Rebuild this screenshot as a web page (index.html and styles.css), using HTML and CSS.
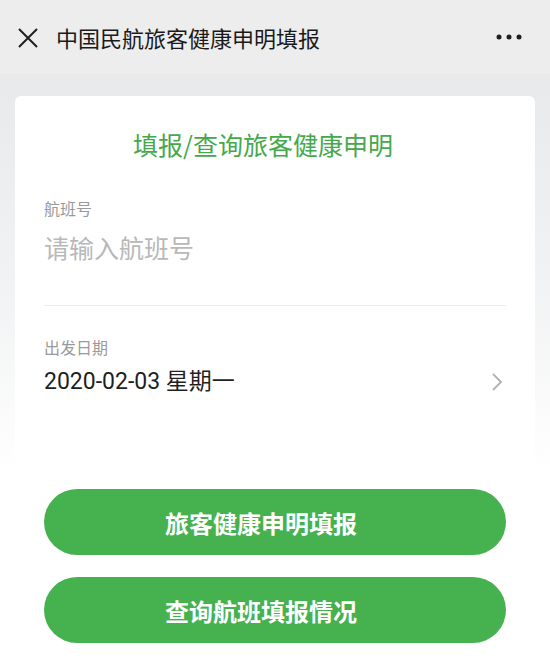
FILE: index.html
```html
<!DOCTYPE html>
<html lang="zh">
<head>
  <meta charset="UTF-8">
  <meta name="viewport" content="width=device-width, initial-scale=1.0">
  <title>中国民航旅客健康申明填报</title>
  <link rel="stylesheet" href="styles.css">
</head>
<body>
  <!-- 顶部导航栏 -->
  <header class="topbar">
    <svg class="close-icon" width="22" height="22" viewBox="0 0 22 22">
      <path d="M2 2 L20 20 M20 2 L2 20" stroke="#1f1f1f" stroke-width="2" fill="none"/>
    </svg>
    <span class="topbar-title">中国民航旅客健康申明填报</span>
    <svg class="more-icon" width="28" height="8" viewBox="0 0 28 8">
      <circle cx="4" cy="4" r="2.5" fill="#1f1f1f"/>
      <circle cx="14" cy="4" r="2.5" fill="#1f1f1f"/>
      <circle cx="24" cy="4" r="2.5" fill="#1f1f1f"/>
    </svg>
  </header>

  <main class="page">
    <!-- 表单卡片 -->
    <section class="card">
      <h1 class="card-title">填报/查询旅客健康申明</h1>

      <div class="field field-line">
        <div class="field-label">航班号</div>
        <div class="field-value placeholder">请输入航班号</div>
      </div>

      <div class="field">
        <div class="field-label">出发日期</div>
        <div class="field-row">
          <span class="field-value">2020-02-03 星期一</span>
          <svg class="chevron" width="12" height="20" viewBox="0 0 12 20">
            <path d="M2 2 L10 10 L2 18" stroke="#b2b2b2" stroke-width="1.8" fill="none"/>
          </svg>
        </div>
      </div>
    </section>

    <!-- 操作按钮 -->
    <div class="actions">
      <button class="btn">旅客健康申明填报</button>
      <button class="btn">查询航班填报情况</button>
    </div>
  </main>
</body>
</html>
```

FILE: styles.css
```css
/* 全局 */
body {
  margin: 0;
  padding: 0;
  font-family: "Noto Sans CJK SC", "Noto Sans", sans-serif;
  background: #fff;
  color: #1f1f1f;
}

/* 顶部导航栏 */
.topbar {
  height: 74px;
  background: #ededed;
  display: flex;
  align-items: center;
  padding: 0 18px 0 17px;
  box-sizing: border-box;
}

.close-icon {
  margin-top: 1px;
  flex-shrink: 0;
}

.topbar-title {
  margin-left: 17px;
  font-size: 22px;
  color: #1a1a1a;
  flex: 1;
}

.more-icon {
  margin-right: 9px;
}

/* 页面主体 */
.page {
  background: linear-gradient(#e8e9eb 0, #f2f3f4 220px, #fff 400px);
  padding: 22px 15px 0;
  height: 586px;
  box-sizing: border-box;
}

.card {
  background: #fff;
  border-radius: 6px 6px 0 0;
  padding: 32px 29px 72px;
}

.card-title {
  margin: 0;
  padding-right: 24px;
  text-align: center;
  font-size: 25px;
  line-height: 32px;
  font-weight: normal;
  color: #45a94c;
}

.field {
  margin-top: 37px;
}

.field-line {
  padding-bottom: 41px;
  border-bottom: 1px solid #ececec;
}

.field-line + .field {
  margin-top: 30px;
}

.field-label {
  font-size: 16px;
  line-height: 22px;
  color: #9a9a9a;
}

.field-value {
  display: block;
  font-size: 23px;
  line-height: 32px;
  color: #1f1f1f;
  font-family: Roboto, "Noto Sans CJK SC", sans-serif;
}

.field-line .field-value {
  margin-top: 11px;
}

.placeholder {
  font-size: 25px;
  line-height: 34px;
  color: #b8b8b8;
  font-family: "Noto Sans CJK SC", sans-serif;
}

.field-row {
  margin-top: 8px;
  display: flex;
  align-items: center;
  justify-content: space-between;
}

.chevron {
  margin-right: 3px;
}

/* 按钮 */
.actions {
  margin-top: 19px;
  padding: 0 29px;
  display: flex;
  flex-direction: column;
  gap: 22px;
}

.btn {
  height: 66px;
  padding: 0 28px 0 0;
  border: none;
  border-radius: 33px;
  background: #46b14f;
  color: #fff;
  font-family: "Noto Sans CJK SC", sans-serif;
  font-size: 24px;
  font-weight: bold;
  cursor: pointer;
}
```
